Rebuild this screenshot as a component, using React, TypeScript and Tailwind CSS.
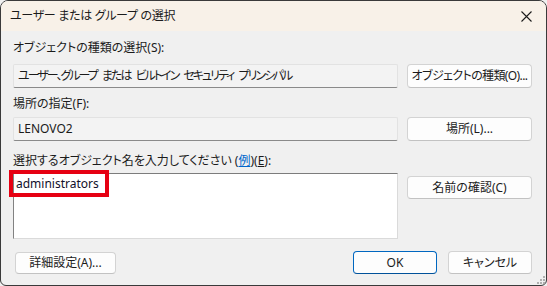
import React from 'react';

const font = "font-['Noto_Sans','Noto_Sans_CJK_JP',sans-serif] [font-feature-settings:'palt']";

const Btn = ({ children, primary = false, className = '' }: { children: React.ReactNode; primary?: boolean; className?: string }) => (
  <div
    className={`flex items-center justify-center whitespace-nowrap rounded-[4px] bg-[#fdfdfd] text-[12px] text-[#1b1b1b] ${
      primary ? 'border border-[#0067c0] border-b-[#00519a]' : 'border border-[#d3d3d3] border-b-[#c2c2c2]'
    } ${className}`}
  >
    {children}
  </div>
);

const Field = ({ children }: { children: React.ReactNode }) => (
  <div className="flex h-[24px] w-[385px] items-center whitespace-nowrap rounded-[2px] border border-[#e2e2e2] border-b-[#8a8a8a] bg-[#f3f3f3] pl-[4px] text-[12px] text-[#1b1b1b]">
    {children}
  </div>
);

export default function App() {
  return (
    <div className={`h-[286px] w-[547px] bg-[#f0f0f0] ${font}`}>
      <div className="flex h-[286px] w-[547px] flex-col overflow-hidden rounded-t-[8px] rounded-b-[6px] border border-[#3a3a3a]">
        {/* title bar */}
        <div className="flex h-[30px] shrink-0 items-center justify-between bg-[#f8f1e8] pl-[9px] pr-[10px]">
          <span className="text-[12px] tracking-[-0.3px] text-[#1b1b1b]">ユーザー または グループ の選択</span>
          <svg width="11" height="11" viewBox="0 0 11 11" className="mr-[4px]">
            <path d="M0.5 0.5 L10.5 10.5 M10.5 0.5 L0.5 10.5" stroke="#1b1b1b" strokeWidth="1.1" />
          </svg>
        </div>

        {/* body */}
        <div className="relative flex flex-1 flex-col pl-[12px] pr-[14px] pt-[10px]">
          <div className="h-[14px] text-[12px] leading-[14px] text-[#1b1b1b]">オブジェクトの種類の選択(S):</div>
          <div className="mt-[9px] flex gap-[9px]">
            <Field>
              <span className="tracking-[-2px] [word-spacing:4px]">ユーザー、グループ または ビルトイン セキュリティ プリンシパル</span>
            </Field>
            <Btn className="h-[24px] w-[125px] tracking-[-0.6px]">オブジェクトの種類(O)...</Btn>
          </div>

          <div className="mt-[9px] h-[14px] text-[12px] leading-[14px] text-[#1b1b1b]">場所の指定(F):</div>
          <div className="mt-[6px] flex gap-[9px]">
            <Field>LENOVO2</Field>
            <Btn className="h-[24px] w-[125px]">場所(L)...</Btn>
          </div>

          <div className="mt-[13px] h-[14px] text-[12px] leading-[14px] text-[#1b1b1b]">
            選択するオブジェクト名を入力してください (<span className="text-[#0066cc] underline">例</span>)(<span className="underline">E</span>):
          </div>
          <div className="mt-[5px] flex gap-[9px]">
            <div className="relative h-[66px] w-[385px] border border-[#dadada] border-l-[#828282] border-t-[#7c7c7c] bg-white">
              <div className="absolute left-[-5px] top-[-4px] flex h-[27px] w-[100px] items-center border-[4px] border-[#e60012] pl-[3px] text-[12px] text-[#10102a]">
                administrators
              </div>
            </div>
            <Btn className="mt-[3px] h-[23px] w-[125px]">名前の確認(C)</Btn>
          </div>

          <div className="mt-[12px] flex items-center">
            <Btn className="ml-[2px] mt-[1px] h-[22px] w-[101px]">詳細設定(A)...</Btn>
            <div className="flex-1" />
            <Btn primary className="h-[23px] w-[84px]">OK</Btn>
            <Btn className="ml-[11px] h-[23px] w-[84px]">キャンセル</Btn>
          </div>

          {/* resize grip */}
          <svg width="8" height="8" viewBox="0 0 8 8" className="absolute bottom-[1px] right-[1px]">
            <rect x="6" y="0" width="2" height="2" fill="#b0b0b0" />
            <rect x="3" y="3" width="2" height="2" fill="#b0b0b0" />
            <rect x="6" y="3" width="2" height="2" fill="#b0b0b0" />
            <rect x="0" y="6" width="2" height="2" fill="#b0b0b0" />
            <rect x="3" y="6" width="2" height="2" fill="#b0b0b0" />
            <rect x="6" y="6" width="2" height="2" fill="#b0b0b0" />
          </svg>
        </div>
      </div>
    </div>
  );
}
